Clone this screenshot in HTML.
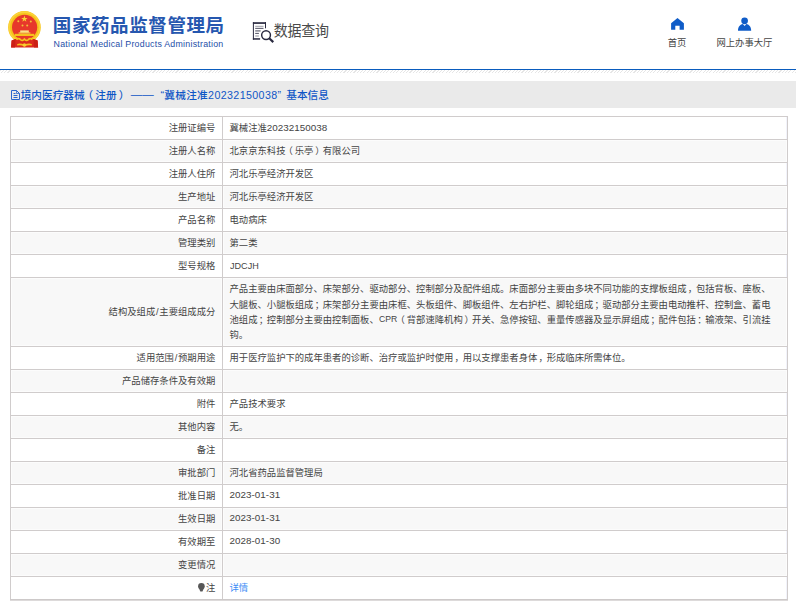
<!DOCTYPE html>
<html lang="zh-CN">
<head>
<meta charset="utf-8">
<title>数据查询</title>
<style>
html,body{margin:0;padding:0;background:#fff;}
body{width:796px;height:608px;position:relative;overflow:hidden;font-family:"Liberation Sans","Noto Sans CJK SC",sans-serif;color:#333;}
.abs{position:absolute;white-space:nowrap;}
#hd{position:absolute;left:0;top:0;width:796px;height:69px;background:#fff;}
#t1{left:52.8px;top:12.9px;font-size:18.5px;font-weight:bold;color:#2657af;line-height:26px;letter-spacing:0.6px;}
#t2{left:53.6px;top:36.5px;font-size:8.8px;color:#1d4ea8;line-height:14px;letter-spacing:0.25px;}
#q{left:273.8px;top:20px;font-size:14px;line-height:22px;color:#4a4a4a;letter-spacing:-0.3px;transform:scaleY(1.06);transform-origin:0 50%;}
.nav{font-size:9.3px;color:#444;line-height:12px;text-align:center;}
#line{position:absolute;left:0;top:69px;width:796px;height:1px;background:#0a5cbe;}
#hatch{position:absolute;left:0;top:70px;width:796px;height:3px;background:repeating-linear-gradient(135deg,#e6e6e6 0,#e6e6e6 0.8px,#fff 0.8px,#fff 2.33px);}
#bar{position:absolute;left:0;top:81px;width:796px;height:27px;background:#eaeaea;}
.bt{top:88px;font-size:10.67px;line-height:14px;color:#0f56c6;font-weight:500;}
table{position:absolute;left:10px;top:116px;width:778px;border-collapse:separate;border-spacing:0;table-layout:fixed;font-size:9.33px;line-height:15.33px;color:#444;border-right:1px solid #d0cccc;border-bottom:1px solid #cdc9c9;box-shadow:0 1px 0 #dddada;}
td{border-left:1px solid #d0cccc;border-top:1px solid #d0cccc;padding:4.33px 6px 2.33px 6.5px;height:15.33px;vertical-align:middle;box-sizing:content-box;}
td.l{width:197.8px;text-align:right;padding-right:6.7px;}
.nl{display:inline-block;transform:scale(.92,1);transform-origin:0 60%;}
.sl{padding:0 0.75px;}
.pc{position:relative;left:0.13em;}
.pl{position:relative;left:-0.2em;}
.pr{position:relative;left:0.2em;}
.n{font-size:9.85px;position:relative;top:-0.7px;letter-spacing:0.03px;line-height:0;}
td.v{text-align:left;}
tr:nth-child(even) td{background:#f8f8f8;box-shadow:inset 0 0 0 1px #fcfcfc;}
tr:nth-child(odd) td.v{box-shadow:inset -1px 0 0 #f2f3fb;}
a{color:#3a8cf5;text-decoration:none;}
</style>
</head>
<body>
<div id="hd">
<svg class="abs" style="left:6px;top:8px" width="40" height="42" viewBox="0 0 40 42">
<circle cx="18.45" cy="19.3" r="16.3" fill="#f6c21c"/>
<circle cx="18.45" cy="19.3" r="15.2" fill="none" stroke="#fbd43a" stroke-width="1.6"/>
<circle cx="18.6" cy="19.3" r="12.6" fill="#e7382b"/>
<polygon points="18.4,7.6 19.2,9.9 21.6,9.9 19.7,11.4 20.4,13.7 18.4,12.3 16.4,13.7 17.1,11.4 15.2,9.9 17.6,9.9" fill="#f9d436"/>
<circle cx="12.3" cy="13.3" r="1" fill="#f3c33a"/><circle cx="24.8" cy="13.5" r="1" fill="#f3c33a"/>
<circle cx="16.5" cy="17.5" r="1" fill="#f3c33a"/><circle cx="21.2" cy="17.5" r="1" fill="#f3c33a"/>
<rect x="14.2" y="22.4" width="8.6" height="2.4" fill="#fbe08a"/>
<rect x="12.6" y="24.4" width="11.8" height="1.2" fill="#f7cf55"/>
<rect x="8.8" y="25.8" width="19.4" height="2.2" fill="#f6c21c"/>
<path d="M5.6 32.4 L9.5 31 L27.5 31 L31.6 32.4 L32.1 39.6 L5.1 39.6 Z" fill="#dc2a1e"/>
<path d="M5.6 32.4 L9.5 31 L9 39.6 L5.1 39.6 Z M27.5 31 L31.6 32.4 L32.1 39.6 L28 39.6 Z" fill="#cb2016"/>
<path d="M10.5 31.8 Q12.5 29.6 14.5 31.6 Q16.5 33.4 18.4 31 Q20.3 33.4 22.3 31.6 Q24.3 29.6 26.3 31.8" stroke="#f6c21c" stroke-width="1.6" fill="none"/>
<path d="M11.2 36 Q14.5 34.6 18.4 36.8 Q22.3 34.6 25.8 36 L25.8 37.6 Q22.3 36.6 18.4 38.6 Q14.5 36.6 11.2 37.6 Z" fill="#f6c21c"/>
<circle cx="18.4" cy="37" r="1.7" fill="#f9cf30"/>
</svg>
<div class="abs" id="t1">国家药品监督管理局</div>
<div class="abs" id="t2">National Medical Products Administration</div>
<svg class="abs" style="left:248px;top:16px" width="32" height="30" viewBox="0 0 32 30" fill="none" stroke="#29293f">
<path d="M5.4 6.2 V23.7" stroke-width="1"/>
<path d="M4.9 7.05 H18" stroke-width="1.7"/>
<path d="M17.5 6.2 V12.3" stroke-width="1"/>
<path d="M4.9 22.95 H12.1" stroke-width="1.5"/>
<path d="M7.2 10.3 H15.5" stroke="#9a9aa4" stroke-width="1"/>
<path d="M7.2 12.35 H15.5" stroke="#3c3c50" stroke-width="0.9"/>
<path d="M7.2 14.9 H12.6" stroke="#70707e" stroke-width="1.3"/>
<path d="M7.2 17.4 H10.9" stroke="#3c3c50" stroke-width="0.9"/>
<path d="M7.2 20 H10.9" stroke="#a4a4ae" stroke-width="1.2"/>
<circle cx="18.06" cy="19.1" r="4.4" stroke-width="1.45"/>
<path d="M21.2 22.3 L25.3 26.1" stroke-width="2.2"/>
</svg>
<div class="abs" id="q">数据查询</div>
<svg class="abs" style="left:670px;top:17px" width="15" height="13" viewBox="0 0 15 13"><path d="M7.5 1.1 L13.9 6.2 V12.7 H9.6 V8.8 H5.3 V12.7 H1.1 V6.2 Z" fill="#0f5cc8"/></svg>
<div class="abs nav" style="left:657px;top:37px;width:40px;">首页</div>
<svg class="abs" style="left:737px;top:16px" width="16" height="16" viewBox="0 0 16 16"><circle cx="7.6" cy="4.8" r="3.35" fill="#0f5cc8"/><path d="M1 14.7 C1 10.6 3.4 8.4 5.9 8.1 L7.6 9.9 L9.3 8.1 C11.8 8.4 14.2 10.6 14.2 14.7 Z" fill="#0f5cc8"/></svg>
<div class="abs nav" style="left:709.4px;top:37px;width:70px;">网上办事大厅</div>
</div>
<div id="line"></div>
<div id="hatch"></div>
<div id="bar"></div>
<svg class="abs" style="left:11px;top:90px" width="9" height="10" viewBox="0 0 9 10" fill="none" stroke="#2a66cc" stroke-width="1"><path d="M0.5 0.5 H5.5 L8.5 3.5 V9.5 H0.5 Z"/><path d="M5.5 0.5 V3.5 H8.5" stroke-width="0.8"/><path d="M2.5 3.5h2M2.5 5.5h4M2.5 7.5h4" stroke="#2a66cc"/></svg>
<div class="abs bt" style="left:20.7px">境内医疗器械<span class="pl">（</span>注册<span class="pr">）</span></div>
<div class="abs bt" style="left:130.8px;top:87px;font-size:11.5px;font-weight:400;">——</div>
<div class="abs bt" style="left:160.4px;letter-spacing:0.3px">“冀械注准<span style="letter-spacing:0.39px">20232150038</span>”</div>
<div class="abs bt" style="left:286.3px">基本信息</div>
<table>
<tr><td class="l">注册证编号</td><td class="v">冀械注准<span class="n">20232150038</span></td></tr>
<tr><td class="l">注册人名称</td><td class="v">北京京东科技<span class="pl">（</span>乐亭<span class="pr">）</span>有限公司</td></tr>
<tr><td class="l">注册人住所</td><td class="v">河北乐亭经济开发区</td></tr>
<tr><td class="l">生产地址</td><td class="v">河北乐亭经济开发区</td></tr>
<tr><td class="l">产品名称</td><td class="v">电动病床</td></tr>
<tr><td class="l">管理类别</td><td class="v">第二类</td></tr>
<tr><td class="l">型号规格</td><td class="v"><span class="n nl" style="margin-left:0.2px">JDCJH</span></td></tr>
<tr><td class="l">结构及组成<span class="sl">/</span>主要组成成分</td><td class="v">产品主要由床面部分、床架部分、驱动部分、控制部分及配件组成。床面部分主要由多块不同功能的支撑板组成<span class="pc">，</span>包括背板、座板、<br>大腿板、小腿板组成<span class="pc">；</span>床架部分主要由床框、头板组件、脚板组件、左右护栏、脚轮组成<span class="pc">；</span>驱动部分主要由电动推杆、控制盒、蓄电<br>池组成<span class="pc">；</span>控制部分主要由控制面板、<span class="n nl" style="margin-right:-2.2px;transform:scale(.88,1)">CPR</span><span class="pl">（</span>背部速降机构<span class="pr">）</span>开关、急停按钮、重量传感器及显示屏组成<span class="pc">；</span>配件包括<span class="pc">：</span>输液架、引流挂<br>钩。</td></tr>
<tr><td class="l">适用范围<span class="sl">/</span>预期用途</td><td class="v">用于医疗监护下的成年患者的诊断、治疗或监护时使用<span class="pc">，</span>用以支撑患者身体<span class="pc">，</span>形成临床所需体位。</td></tr>
<tr><td class="l">产品储存条件及有效期</td><td class="v"></td></tr>
<tr><td class="l">附件</td><td class="v">产品技术要求</td></tr>
<tr><td class="l">其他内容</td><td class="v">无。</td></tr>
<tr><td class="l">备注</td><td class="v"></td></tr>
<tr><td class="l">审批部门</td><td class="v">河北省药品监督管理局</td></tr>
<tr><td class="l">批准日期</td><td class="v"><span class="n">2023-01-31</span></td></tr>
<tr><td class="l">生效日期</td><td class="v"><span class="n">2023-01-31</span></td></tr>
<tr><td class="l">有效期至</td><td class="v"><span class="n">2028-01-30</span></td></tr>
<tr><td class="l">变更情况</td><td class="v"></td></tr>
<tr><td class="l"><svg width="7" height="9" viewBox="0 0 7 9" style="vertical-align:-1.2px;margin-right:1.3px"><circle cx="3.4" cy="3.3" r="3.3" fill="#575757"/><path d="M1 5.2 L2.3 8.4 H4.5 L5.8 5.2 Z" fill="#575757"/></svg>注</td><td class="v"><a>详情</a></td></tr>
</table>
</body>
</html>
